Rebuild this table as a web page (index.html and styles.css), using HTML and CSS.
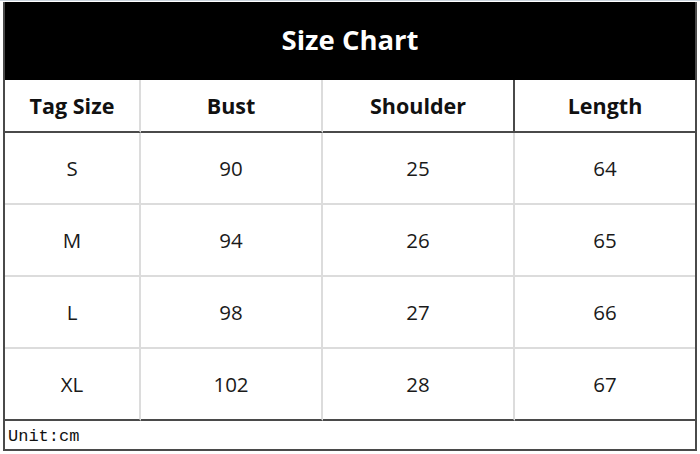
FILE: index.html
```html
<!DOCTYPE html>
<html>
<head>
<meta charset="utf-8">
<link rel="stylesheet" href="styles.css">
</head>
<body>
<table class="chart">
  <colgroup>
    <col class="c1"><col class="c2"><col class="c3"><col class="c4">
  </colgroup>
  <tr class="title-row"><td colspan="4" class="title">Size Chart</td></tr>
  <tr class="head-row">
    <th>Tag Size</th><th>Bust</th><th class="dark-right">Shoulder</th><th class="last">Length</th>
  </tr>
  <tr class="data-row"><td>S</td><td>90</td><td>25</td><td class="last">64</td></tr>
  <tr class="data-row"><td>M</td><td>94</td><td>26</td><td class="last">65</td></tr>
  <tr class="data-row"><td>L</td><td>98</td><td>27</td><td class="last">66</td></tr>
  <tr class="data-row final"><td>XL</td><td>102</td><td>28</td><td class="last">67</td></tr>
  <tr class="unit-row"><td colspan="4" class="unit">Unit:cm</td></tr>
</table>
</body>
</html>
```

FILE: styles.css
```css
html, body {
  margin: 0;
  padding: 0;
  background: #ffffff;
}

body {
  padding: 1px 0 0 3px;
  border-top: 1px solid #c9d3dc;
  width: 700px;
  height: 454px;
  box-sizing: border-box;
}

.chart {
  width: 692px;
  table-layout: fixed;
  border-collapse: separate;
  border-spacing: 0;
  border-left: 2px solid #4a4a4a;
  border-right: 2px solid #4a4a4a;
  font-family: "Open Sans", "Noto Sans", sans-serif;
  color: #111;
}

.c1 { width: 136px; }
.c2 { width: 182px; }
.c3 { width: 192px; }
.c4 { width: 180px; }

.chart td, .chart th {
  padding: 0;
  text-align: center;
  vertical-align: middle;
  border-right: 2px solid #dcdcdc;
  border-bottom: 2px solid #dcdcdc;
  box-sizing: border-box;
}

.chart .last { border-right: none; }

.title-row td.title {
  background: #000;
  color: #fff;
  height: 78px;
  font-size: 27.5px;
  font-weight: 700;
  border: none;
  padding-bottom: 3px;
}

.head-row th {
  height: 53px;
  font-size: 21.5px;
  font-weight: 700;
  border-bottom-color: #4a4a4a;
}

.head-row th.dark-right { border-right-color: #4a4a4a; }
.head-row th.last { border-right: none; }

.data-row td {
  height: 72px;
  font-size: 20.5px;
  font-weight: 400;
  color: #1a1a1a;
}

.data-row.final td { border-bottom-color: #4a4a4a; }

.unit-row td.unit {
  height: 30px;
  text-align: left;
  padding: 3px 0 0 3px;
  font-family: "Liberation Mono", "DejaVu Sans Mono", monospace;
  font-size: 17px;
  font-weight: 400;
  color: #111;
  border-right: none;
  border-bottom-color: #4a4a4a;
}
```
